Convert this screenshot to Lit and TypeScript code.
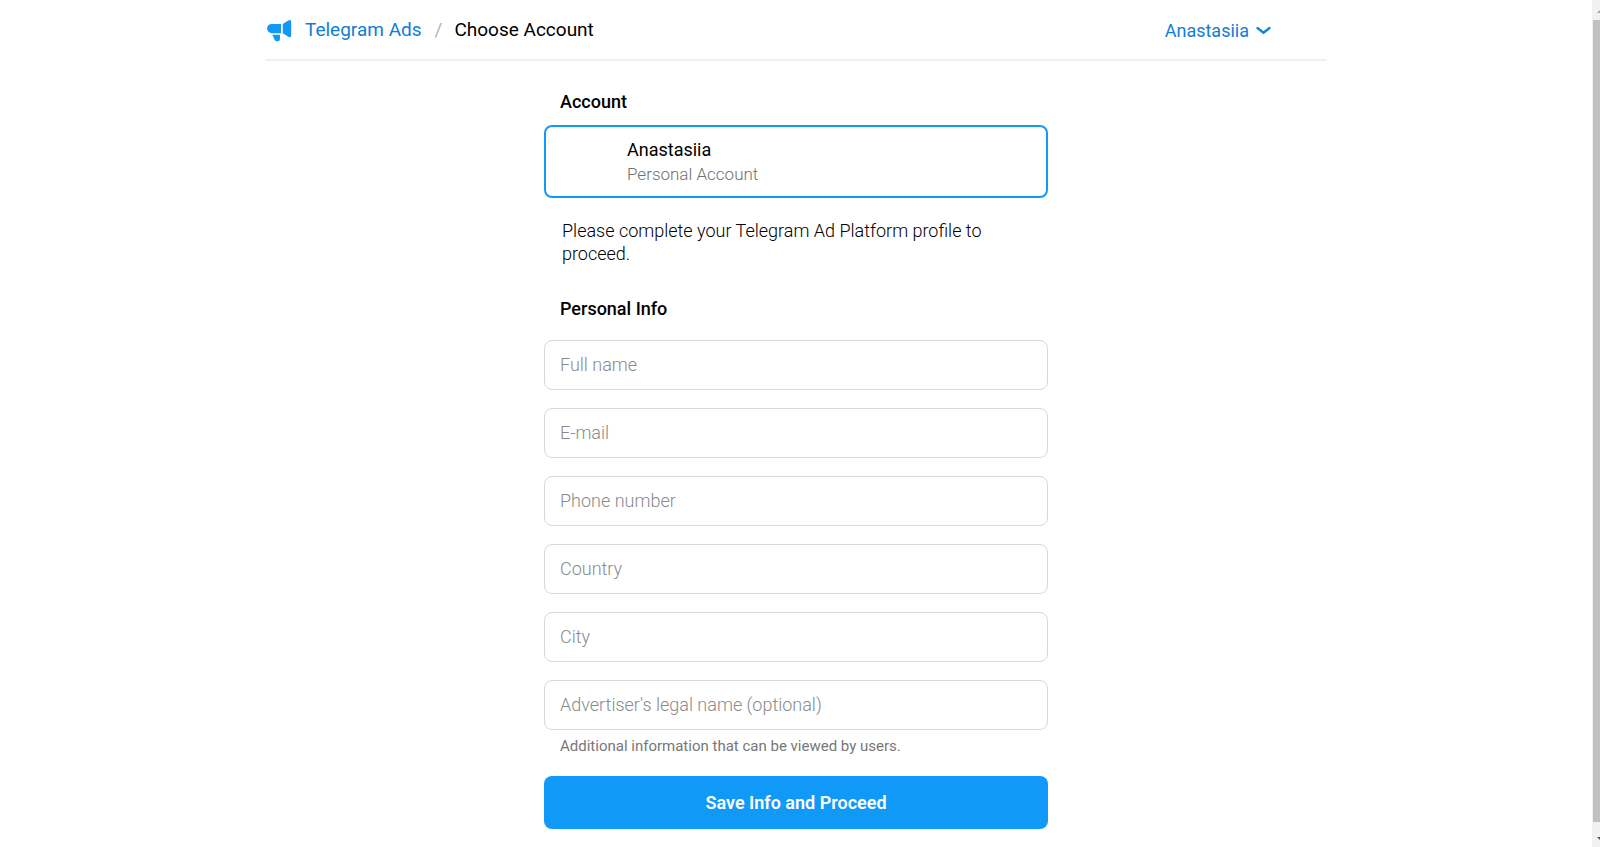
import { LitElement, html, css, svg } from "lit";
import { customElement } from "lit/decorators.js";

interface Field {
  id: string;
  label: string;
  type: string;
  hint?: string;
}

const FIELDS: Field[] = [
  { id: "full-name", label: "Full name", type: "text" },
  { id: "email", label: "E-mail", type: "email" },
  { id: "phone", label: "Phone number", type: "tel" },
  { id: "country", label: "Country", type: "text" },
  { id: "city", label: "City", type: "text" },
  {
    id: "legal-name",
    label: "Advertiser's legal name (optional)",
    type: "text",
    hint: "Additional information that can be viewed by users.",
  },
];

const megaphone = svg`
  <path d="M4.700 4H14V13.200H4.700A4.600 4.600 0 0 1 4.700 4Z"/>
  <path d="M15.800 4L20.800 .7Q24.200 -1 24.200 2V15.500Q24.200 18.300 20.800 16.600L15.800 13.200Z"/>
  <path d="M5.300 14.800H13V19Q13 21.200 10.800 21.200H9.800Q8.300 21.200 7.700 19.900Z"/>`;

@customElement("app-root")
export class AppRoot extends LitElement {
  static styles = css`
    :host {
      display: grid;
      grid-template-columns: minmax(0, 1fr) 8px;
      min-height: 100vh;
      background: #fff;
      color: #000;
      font: 17px/22px Roboto, sans-serif;
    }
    * {
      box-sizing: border-box;
    }
    a {
      color: #0f7dd6;
      text-decoration: none;
    }
    .page {
      width: 100%;
      max-width: 1062px;
      margin: 0 auto;
    }
    .header {
      display: flex;
      align-items: center;
      justify-content: space-between;
      height: 61px;
      padding-right: 56px;
      border-bottom: 2px solid #f0f0f0;
    }
    .crumbs {
      display: flex;
      align-items: center;
      font-size: 19px;
      font-weight: 450;
    }
    .brand {
      display: flex;
      align-items: center;
      gap: 13px;
      padding-left: 2px;
    }
    .logo {
      display: block;
      width: 25px;
      height: 22px;
      margin-top: 2px;
      fill: #1199f7;
    }
    .slash {
      margin: 0 12px 0 13px;
      color: #b5b5b5;
      font-weight: 400;
    }
    .current {
      margin: 0;
      font: inherit;
    }
    .user {
      display: flex;
      align-items: center;
      gap: 7px;
      padding: 2px 0 0;
      border: 0;
      background: none;
      color: #0f7dd6;
      font: inherit;
      font-size: 18px;
      font-weight: 450;
    }
    .chevron {
      display: block;
      width: 15px;
      height: 9px;
      fill: none;
      stroke: #0f88e0;
      stroke-width: 2.4;
      stroke-linecap: round;
      stroke-linejoin: round;
    }
    .content {
      max-width: 504px;
      margin: 0 auto;
      padding: 30px 0 18px;
    }
    .title {
      margin: 0;
      padding: 0 16px;
      font-size: 18px;
      font-weight: 500;
    }
    .account {
      display: block;
      width: 100%;
      margin-top: 12px;
      padding: 10px 16px 9px 81px;
      border: 2px solid #1199f7;
      border-radius: 8px;
      background: #fff;
      font: inherit;
      line-height: 25px;
      text-align: left;
      color: #000;
    }
    .name,
    .kind {
      display: block;
    }
    .name {
      font-size: 18px;
      font-weight: 450;
    }
    .kind {
      font-weight: 300;
      color: #707070;
    }
    .note {
      margin: 21px 0 33px;
      padding: 0 18px;
      font-size: 18px;
      font-weight: 300;
      line-height: 23px;
      color: #000;
    }
    .fields {
      display: grid;
      gap: 18px;
      margin-top: 20px;
    }
    .input {
      display: block;
      width: 100%;
      height: 50px;
      padding: 0 15px 2px;
      border: 1px solid #d9d9d9;
      border-radius: 8px;
      background: #fff;
      font: inherit;
      font-size: 18px;
      font-weight: 300;
      color: #000;
    }
    .input::placeholder {
      color: #8a8a8a;
      opacity: 1;
    }
    .hint {
      margin: 6px 0 0;
      padding: 0 16px;
      font-size: 15px;
      line-height: 20px;
      color: #777;
    }
    .save {
      display: block;
      width: 100%;
      height: 53px;
      margin-top: 20px;
      border: 0;
      border-radius: 8px;
      background: #1199f7;
      color: #fff;
      font: inherit;
      font-size: 18px;
      font-weight: 600;
    }
    .scrollbar {
      position: sticky;
      top: 0;
      display: flex;
      flex-direction: column;
      height: 100vh;
      overflow: hidden;
      background: #f1f1f1;
    }
    .arrow {
      display: block;
      flex: none;
      width: 17px;
      height: 20px;
    }
    .thumb {
      flex: 1;
      margin: 0 0 5px 1px;
      background: #c1c1c1;
    }
  `;

  render() {
    return html`
      <div class="page">
        <header class="header">
          <nav class="crumbs" aria-label="Breadcrumb">
            <a class="brand" href="#">
              <svg class="logo" viewBox="0 0 25 22" aria-hidden="true">${megaphone}</svg>
              Telegram Ads
            </a>
            <span class="slash">/</span>
            <h1 class="current">Choose Account</h1>
          </nav>
          <button class="user" type="button">
            Anastasiia
            <svg class="chevron" viewBox="0 0 15 9" aria-hidden="true">
              <path d="M1.500 2L7.500 6.800L13.500 2" />
            </svg>
          </button>
        </header>
        <main class="content">
          <h2 class="title">Account</h2>
          <button class="account" type="button">
            <span class="name">Anastasiia</span>
            <span class="kind">Personal Account</span>
          </button>
          <p class="note">Please complete your Telegram Ad Platform profile to proceed.</p>
          <form>
            <h2 class="title">Personal Info</h2>
            <div class="fields">
              ${FIELDS.map(
                (f) => html`
                  <div>
                    <input class="input" id=${f.id} type=${f.type} placeholder=${f.label} aria-label=${f.label} />
                    ${f.hint ? html`<p class="hint">${f.hint}</p>` : ""}
                  </div>
                `
              )}
            </div>
            <button class="save" type="submit">Save Info and Proceed</button>
          </form>
        </main>
      </div>
      <div class="scrollbar" aria-hidden="true">
        <svg class="arrow" viewBox="0 0 17 20"><path d="M5 13L8.500 9.500L12 13Z" fill="#a3a3a3" /></svg>
        <div class="thumb"></div>
        <svg class="arrow" viewBox="0 0 17 20"><path d="M5 10L8.500 13.500L12 10Z" fill="#505050" /></svg>
      </div>
    `;
  }
}
